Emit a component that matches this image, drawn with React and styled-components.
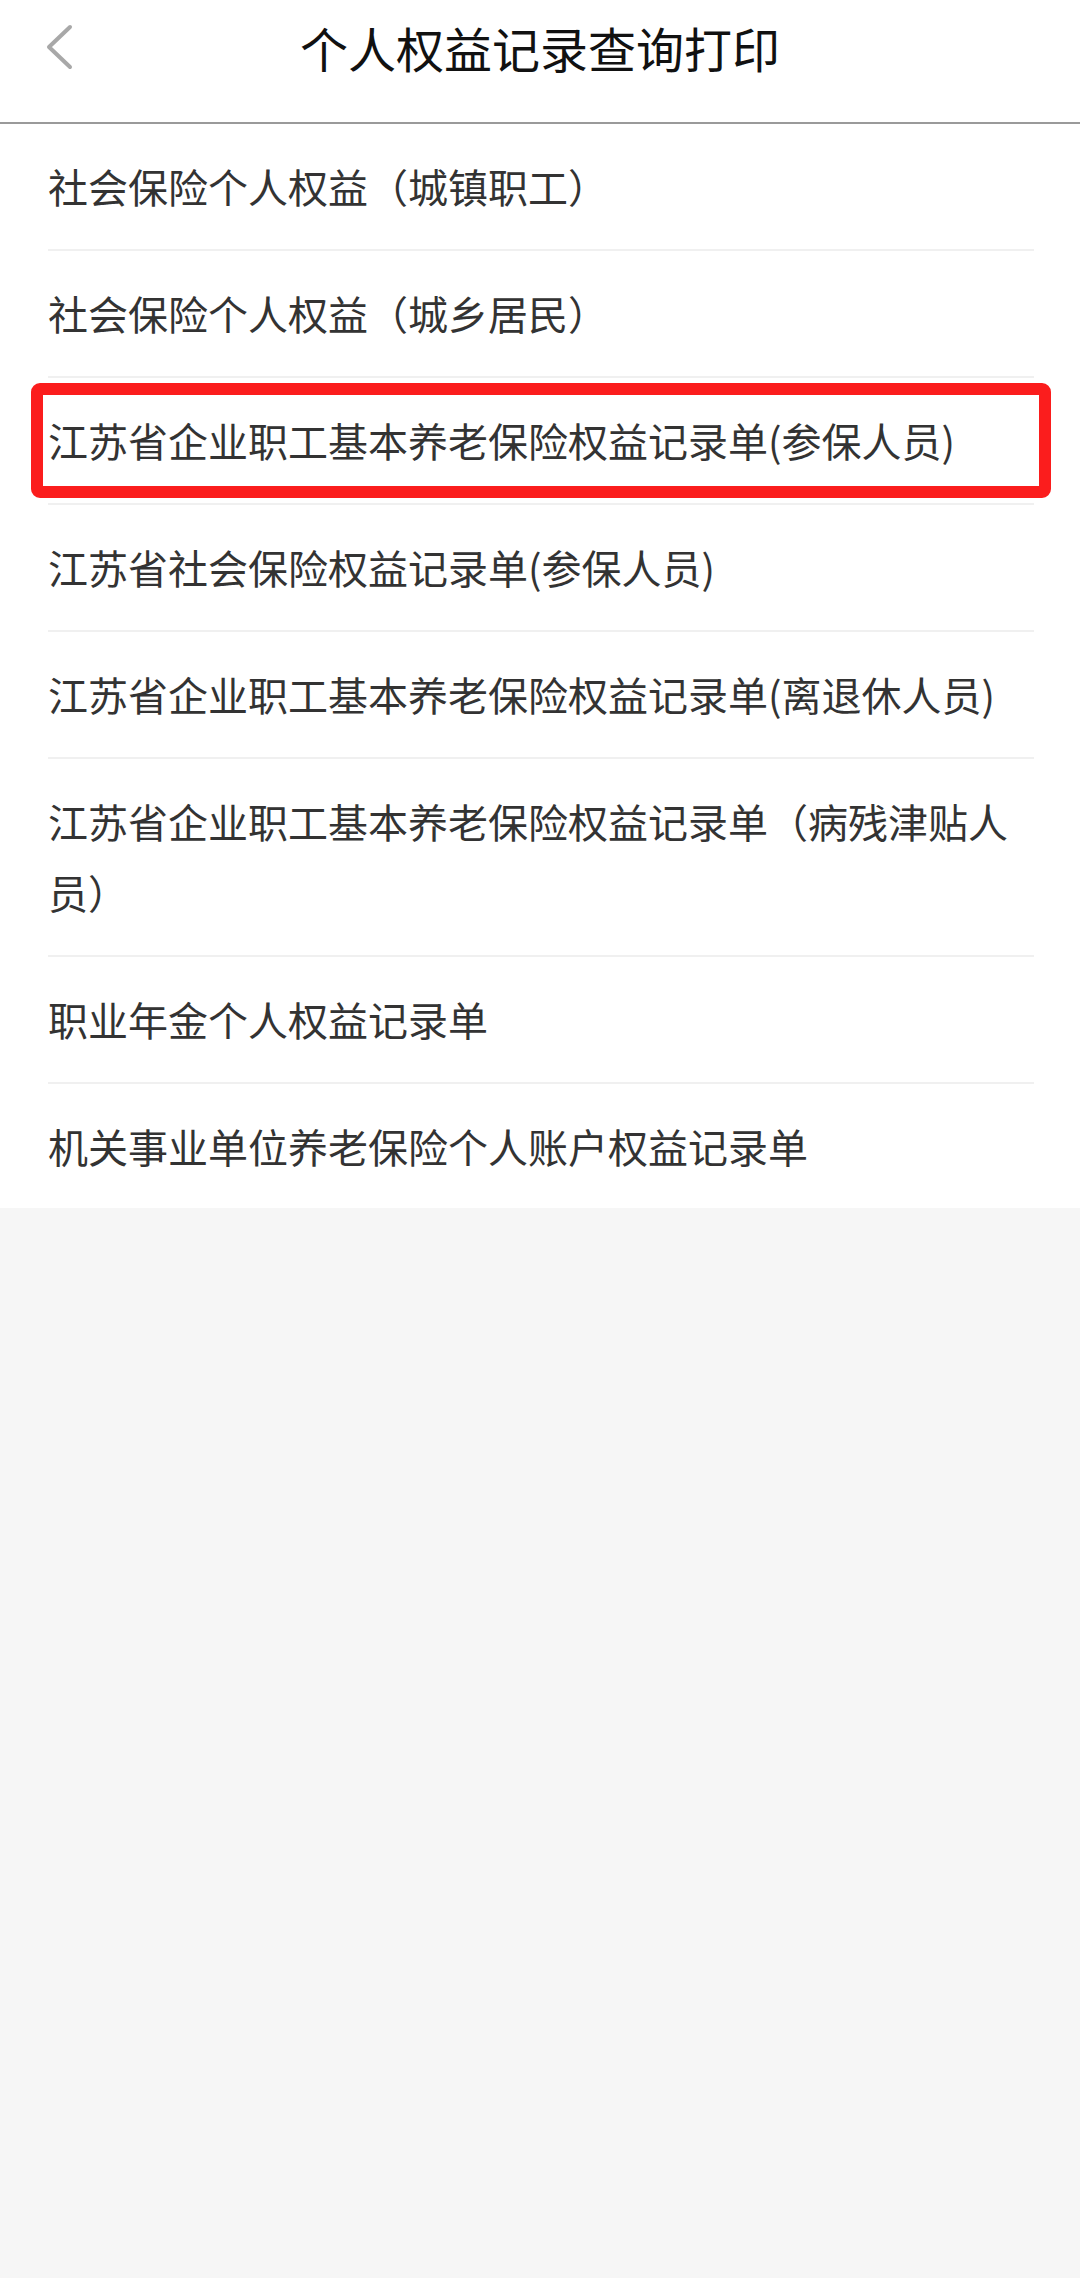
import styled, { createGlobalStyle } from 'styled-components'

const GlobalStyle = createGlobalStyle`
    html, body {
        margin: 0;
        padding: 0;
        background: #f6f6f6;
    }
    body {
        font-family: "Noto Sans CJK SC", "Noto Sans", sans-serif;
    }
`

const records = [
    { id: 1, title: '社会保险个人权益（城镇职工）' },
    { id: 2, title: '社会保险个人权益（城乡居民）' },
    { id: 3, title: '江苏省企业职工基本养老保险权益记录单(参保人员)', marked: true },
    { id: 4, title: '江苏省社会保险权益记录单(参保人员)' },
    { id: 5, title: '江苏省企业职工基本养老保险权益记录单(离退休人员)' },
    { id: 6, title: '江苏省企业职工基本养老保险权益记录单（病残津贴人员）' },
    { id: 7, title: '职业年金个人权益记录单' },
    { id: 8, title: '机关事业单位养老保险个人账户权益记录单' },
]

function BackIcon() {
    return (
        <svg width="30" height="46" viewBox="0 0 30 46">
            <polyline
                points="25,3 4,23 25,43"
                fill="none"
                stroke="#a8a8a8"
                strokeWidth="4"
                strokeLinecap="round"
                strokeLinejoin="round"
            />
        </svg>
    )
}

function App() {
    return (
        <Page>
            <GlobalStyle />
            <Header>
                <BackButton type="button" aria-label="返回">
                    <BackIcon />
                </BackButton>
                <Title>个人权益记录查询打印</Title>
                <span />
            </Header>
            <List>
                {records.map(record => (
                    <Item key={record.id} $marked={record.marked}>
                        {record.title}
                    </Item>
                ))}
            </List>
        </Page>
    )
}

export default App

const Page = styled.div`
    min-height: 2278px;
    background: #f6f6f6;
`

const Header = styled.header`
    display: grid;
    grid-template-columns: 1fr auto 1fr;
    align-items: start;
    height: 122px;
    background: #fff;
    border-bottom: 2px solid #9a9a9a;
    box-sizing: content-box;
`

const BackButton = styled.button`
    justify-self: start;
    display: flex;
    align-items: center;
    height: 94px;
    margin-left: 45px;
    padding: 0;
    border: none;
    background: none;
    cursor: pointer;
`

const Title = styled.h1`
    margin: 0;
    line-height: 94px;
    font-size: 48px;
    font-weight: 400;
    color: #111;
`

const List = styled.ul`
    list-style: none;
    margin: 0;
    padding: 0 46px 0 48px;
    background: #fff;
`

const Item = styled.li`
    position: relative;
    padding: 27px 0;
    line-height: 71px;
    font-size: 40px;
    color: #333;
    border-bottom: 2px solid #f0f0f0;

    &:last-child {
        border-bottom: none;
        padding-bottom: 26px;
    }

    ${props => props.$marked && `
        &::after {
            content: '';
            position: absolute;
            top: 5px;
            bottom: 5px;
            left: -17px;
            right: -17px;
            border: 12px solid #fb1d1d;
            border-radius: 9px;
            pointer-events: none;
        }
    `}
`
